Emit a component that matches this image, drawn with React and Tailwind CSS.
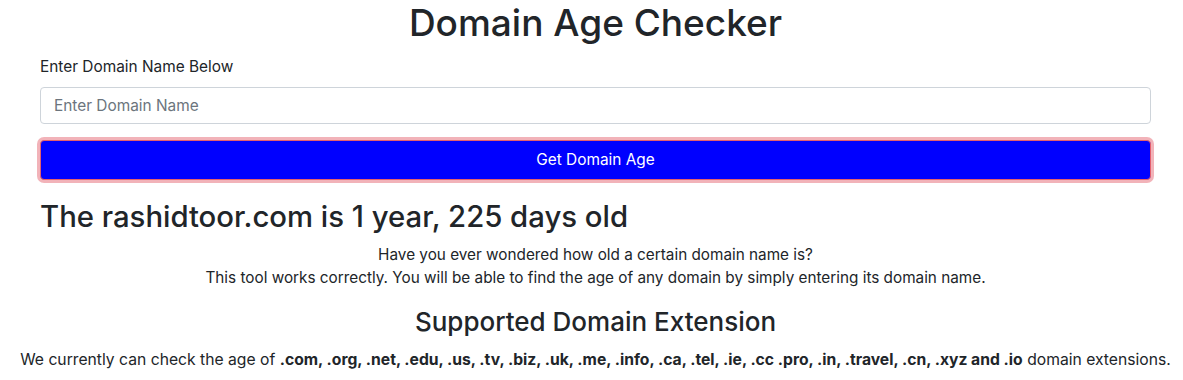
import React from 'react';

const extensions = '.com, .org, .net, .edu, .us, .tv, .biz, .uk, .me, .info, .ca, .tel, .ie, .cc .pro, .in, .travel, .cn, .xyz and .io';

const App = () => {
  return (
    <div className="w-full overflow-hidden bg-white text-[#212529] font-['Inter',sans-serif]">
      <div className="ml-[40px] w-[1111px]">
        <h1 className="text-center text-[37px] font-medium leading-[46px]">Domain Age Checker</h1>

        <form className="mt-[9px]" onSubmit={(e) => e.preventDefault()}>
          <label className="block text-[15.4px] leading-[24px]">Enter Domain Name Below</label>
          <input
            type="text"
            placeholder="Enter Domain Name"
            className="mt-[8px] block h-[37px] w-full rounded-[4px] border border-[#ced4da] px-[13px] text-[15.4px] placeholder:text-[#6c757d] outline-none"
          />
          <button
            type="submit"
            className="mt-[16px] block h-[40px] w-full rounded-[4px] border border-[#e4606d] bg-[#0000ff] text-[15.4px] text-white shadow-[0_0_0_3px_rgba(231,116,128,0.55)]"
          >
            Get Domain Age
          </button>
        </form>

        <h2 className="mt-[18px] text-[29.3px] font-medium leading-[38px]">The rashidtoor.com is 1 year, 225 days old</h2>

        <div className="mt-[7px] text-center text-[15.3px] leading-[23px]">
          <p>Have you ever wondered how old a certain domain name is?</p>
          <p>This tool works correctly. You will be able to find the age of any domain by simply entering its domain name.</p>
        </div>

        <h3 className="mt-[17px] text-center text-[26px] font-medium leading-[32px]">Supported Domain Extension</h3>

        <p className="ml-[-40px] mt-[10px] w-[1191px] text-center text-[15.7px] leading-[24px]">
          We currently can check the age of <b className="font-bold">{extensions}</b> domain extensions.
        </p>
      </div>
    </div>
  );
};

export default App;
